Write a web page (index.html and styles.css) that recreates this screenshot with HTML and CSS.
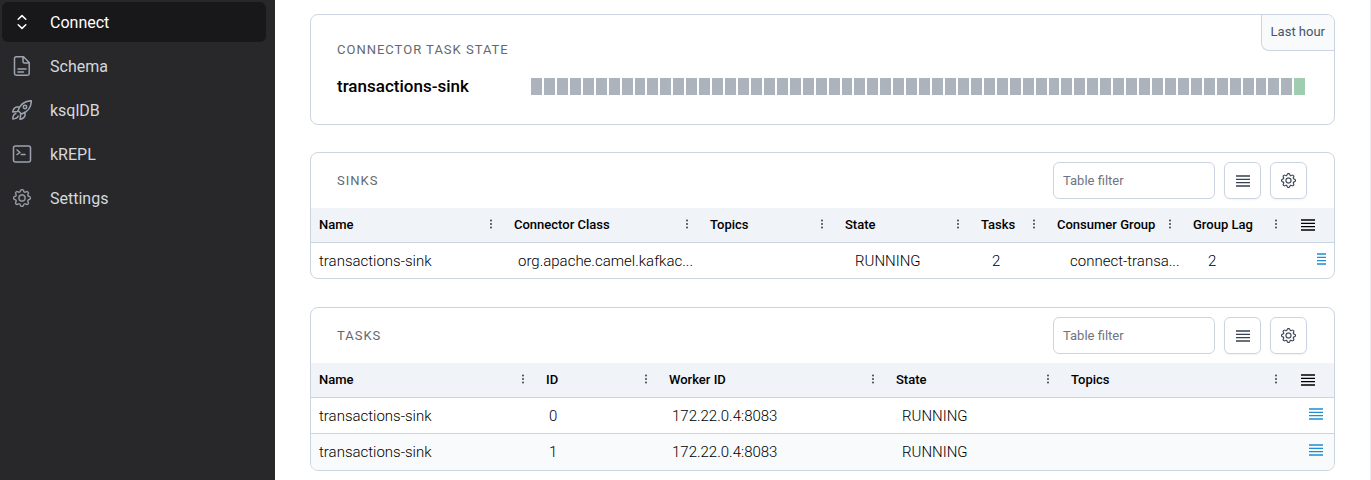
FILE: index.html
```html
<!DOCTYPE html>
<html lang="en">
<head>
<meta charset="utf-8">
<title>Connect</title>
<link rel="stylesheet" href="styles.css">
</head>
<body>
<svg class="sprite" aria-hidden="true">
  <symbol id="gear" viewBox="0 0 16 16"><path fill="currentColor" stroke="currentColor" stroke-width=".2" d="M8 4.754a3.246 3.246 0 1 0 0 6.492 3.246 3.246 0 0 0 0-6.492zM5.754 8a2.246 2.246 0 1 1 4.492 0 2.246 2.246 0 0 1-4.492 0z"/><path fill="currentColor" stroke="currentColor" stroke-width=".2" d="M9.796 1.343c-.527-1.79-3.065-1.79-3.592 0l-.094.319a.873.873 0 0 1-1.255.52l-.292-.16c-1.64-.892-3.433.902-2.54 2.541l.159.292a.873.873 0 0 1-.52 1.255l-.319.094c-1.79.527-1.79 3.065 0 3.592l.319.094a.873.873 0 0 1 .52 1.255l-.16.292c-.892 1.64.901 3.434 2.541 2.54l.292-.159a.873.873 0 0 1 1.255.52l.094.319c.527 1.79 3.065 1.79 3.592 0l.094-.319a.873.873 0 0 1 1.255-.52l.292.16c1.64.893 3.434-.902 2.54-2.541l-.159-.292a.873.873 0 0 1 .52-1.255l.319-.094c1.79-.527 1.79-3.065 0-3.592l-.319-.094a.873.873 0 0 1-.52-1.255l.16-.292c.893-1.64-.902-3.433-2.541-2.54l-.292.159a.873.873 0 0 1-1.255-.52l-.094-.319zm-2.633.283c.246-.835 1.428-.835 1.674 0l.094.319a1.873 1.873 0 0 0 2.693 1.115l.291-.16c.764-.415 1.6.42 1.184 1.185l-.159.292a1.873 1.873 0 0 0 1.116 2.692l.318.094c.835.246.835 1.428 0 1.674l-.319.094a1.873 1.873 0 0 0-1.115 2.693l.16.291c.415.764-.42 1.6-1.185 1.184l-.291-.159a1.873 1.873 0 0 0-2.693 1.116l-.094.318c-.246.835-1.428.835-1.674 0l-.094-.319a1.873 1.873 0 0 0-2.692-1.115l-.292.16c-.764.415-1.6-.42-1.184-1.185l.159-.291A1.873 1.873 0 0 0 1.945 8.93l-.319-.094c-.835-.246-.835-1.428 0-1.674l.319-.094A1.873 1.873 0 0 0 3.06 4.377l-.16-.292c-.415-.764.42-1.6 1.185-1.184l.292.159a1.873 1.873 0 0 0 2.692-1.115l.094-.319z"/></symbol>
  <symbol id="lines" viewBox="0 0 14 12" preserveAspectRatio="none"><path fill="none" stroke="currentColor" stroke-width="1.3" d="M0 1h14M0 4.4h14M0 7.7h14M0 11h14"/></symbol>
  <symbol id="dots" viewBox="0 0 4 10"><g fill="currentColor"><circle cx="2" cy="1.5" r=".9"/><circle cx="2" cy="5" r=".9"/><circle cx="2" cy="8.5" r=".9"/></g></symbol>
</svg>
<div class="app">
  <nav class="sidebar">
    <a class="nav-item active" href="#connect">
      <svg class="nav-icon" viewBox="0 0 20 20"><path d="M6.2 7.2 10 3.6l3.8 3.6M6.2 12.8l3.8 3.6 3.8-3.6"/></svg>Connect</a>
    <a class="nav-item" href="#schema">
      <svg class="nav-icon" viewBox="0 0 20 20"><path d="M4.2.8h7.3l5.7 5.7v11a1.7 1.7 0 0 1-1.7 1.7H4.2a1.7 1.7 0 0 1-1.7-1.7v-15A1.7 1.7 0 0 1 4.2.8ZM11 1v4.5A1.5 1.5 0 0 0 12.500 7H17M6 13h8M6 16h5.500"/></svg>Schema</a>
    <a class="nav-item" href="#ksqldb">
      <svg class="nav-icon" viewBox="0 0 20 20"><path d="M6 10.500C8 5 12.500.800 19.300.700 19.500 7 15.500 12 9.500 14ZM6 10.500l3.500 3.500M7.600 7H4.500C2.500 7.500 1.200 9.500.700 12l5-.500M13 12.500v3c-.500 2-2.500 3.300-5 3.800l.700-5M3.800 13.500C1.800 14 .900 16.500.800 19c2.500-.100 4.700-.900 5.400-2.900"/><circle cx="13" cy="7" r="1.700"/></svg>ksqlDB</a>
    <a class="nav-item" href="#krepl">
      <svg class="nav-icon" viewBox="0 0 20 20"><rect x="1.500" y="2" width="17" height="16" rx="2"/><path d="M5 6l3 2.500L5 10.500M9.300 10.500H13"/></svg>kREPL</a>
    <a class="nav-item" href="#settings">
      <svg class="nav-icon gear"><use href="#gear"/></svg>Settings</a>
  </nav>
  <main class="content">
    <section class="card state-card">
      <button class="range" type="button">Last hour</button>
      <h2 class="card-title">Connector task state</h2>
      <div class="state-row">
        <h3 class="connector">transactions-sink</h3>
        <div class="bars" id="bars"></div>
      </div>
    </section>

    <section class="card">
      <header class="toolbar">
        <h2 class="card-title">Sinks</h2>
        <input class="filter" type="text" placeholder="Table filter" aria-label="Filter sinks">
        <button class="tool" type="button" aria-label="Rows"><svg class="lines"><use href="#lines"/></svg></button>
        <button class="tool" type="button" aria-label="Table settings"><svg class="tool-gear"><use href="#gear"/></svg></button>
      </header>
      <table class="grid sinks">
        <thead><tr>
          <th>Name<svg class="dots"><use href="#dots"/></svg></th>
          <th>Connector Class<svg class="dots"><use href="#dots"/></svg></th>
          <th>Topics<svg class="dots"><use href="#dots"/></svg></th>
          <th>State<svg class="dots"><use href="#dots"/></svg></th>
          <th>Tasks<svg class="dots"><use href="#dots"/></svg></th>
          <th>Consumer Group<svg class="dots"><use href="#dots"/></svg></th>
          <th>Group Lag<svg class="dots"><use href="#dots"/></svg></th>
          <th class="menu"><svg class="lines"><use href="#lines"/></svg></th>
        </tr></thead>
        <tbody><tr>
          <td>transactions-sink</td><td>org.apache.camel.kafkac...</td><td></td><td>RUNNING</td><td>2</td><td>connect-transa...</td><td>2</td>
          <td class="action"><svg class="lines small"><use href="#lines"/></svg></td>
        </tr></tbody>
      </table>
    </section>

    <section class="card">
      <header class="toolbar">
        <h2 class="card-title">Tasks</h2>
        <input class="filter" type="text" placeholder="Table filter" aria-label="Filter tasks">
        <button class="tool" type="button" aria-label="Rows"><svg class="lines"><use href="#lines"/></svg></button>
        <button class="tool" type="button" aria-label="Table settings"><svg class="tool-gear"><use href="#gear"/></svg></button>
      </header>
      <table class="grid tasks">
        <thead><tr>
          <th>Name<svg class="dots"><use href="#dots"/></svg></th>
          <th>ID<svg class="dots"><use href="#dots"/></svg></th>
          <th>Worker ID<svg class="dots"><use href="#dots"/></svg></th>
          <th>State<svg class="dots"><use href="#dots"/></svg></th>
          <th>Topics<svg class="dots"><use href="#dots"/></svg></th>
          <th class="menu"><svg class="lines"><use href="#lines"/></svg></th>
        </tr></thead>
        <tbody>
          <tr><td>transactions-sink</td><td>0</td><td>172.22.0.4:8083</td><td>RUNNING</td><td></td>
          <td class="action"><svg class="lines"><use href="#lines"/></svg></td></tr>
          <tr><td>transactions-sink</td><td>1</td><td>172.22.0.4:8083</td><td>RUNNING</td><td></td>
          <td class="action"><svg class="lines"><use href="#lines"/></svg></td></tr>
        </tbody>
      </table>
    </section>
  </main>
</div>
<script src="bars.js"></script>
</body>
</html>
```
FILE: styles.css
```css
* { box-sizing: border-box; }
body { margin: 0; background: #fff; color: #000; font-family: Roboto, "Liberation Sans", sans-serif; font-size: 15px; }
h2, h3 { margin: 0; }
svg { display: block; flex: none; }
.sprite { display: none; }
.app { display: flex; min-height: 100vh; border-right: 1px solid #e9eaec; }

.sidebar { flex: none; width: 275px; padding: 2px 9px 2px 2px; display: flex; flex-direction: column; gap: 4px; background: #28282a; }
.nav-item { display: flex; align-items: center; gap: 18px; height: 40px; padding: 0 10px; border-radius: 6px; color: #d5d8dd; font-size: 16px; text-decoration: none; }
.nav-item.active { background: #18181a; color: #fff; }
.nav-icon { width: 20px; height: 20px; fill: none; stroke: #9ca3af; stroke-width: 1.5; stroke-linecap: round; stroke-linejoin: round; }
.active .nav-icon { stroke: #fff; }
.nav-icon.gear { padding: 1px; color: #9ca3af; stroke: none; }

.content { flex: 1; min-width: 0; padding: 14px 35px 9px; display: flex; flex-direction: column; }
.card { position: relative; border: 1px solid #cbd5e1; border-radius: 8px; overflow: hidden; background: #fff; }
.card + .card { margin-top: 28px; }
.state-card + .card { margin-top: 27px; }
.card-title { color: #64696f; font-size: 13px; line-height: 16px; font-weight: 400; letter-spacing: 1px; text-transform: uppercase; }
.state-card { padding: 27px 29px 26px 26px; }
.range { position: absolute; top: 0; right: 0; height: 36px; padding: 0 9px 2px; border: 0 solid #cbd5e1; border-width: 0 0 1px 1px; border-bottom-left-radius: 8px; background: #f8fafc; color: #475569; font: 13px Roboto, "Liberation Sans", sans-serif; }
.state-row { display: flex; align-items: center; margin-top: 16px; }
.connector { flex: none; width: 194px; font-size: 17px; line-height: 24px; font-weight: 500; }
.bars { flex: 1; display: flex; gap: 2px; height: 17px; }
.bar { flex: 1; background: #adb3bc; }
.bar.running { background: #a0ccb0; }

.toolbar { display: flex; align-items: center; height: 55px; padding: 0 27px 0 26px; }
.toolbar .card-title { flex: 1; }
.filter { width: 162px; height: 37px; padding: 0 9px; border: 1px solid #cbd5e1; border-radius: 6px; background: #fff; font: 13px Roboto, "Liberation Sans", sans-serif; }
.filter::placeholder { color: #6f7580; opacity: 1; }
.tool { display: flex; align-items: center; justify-content: center; width: 37px; height: 37px; margin-left: 9px; padding: 0; border: 1px solid #cbd5e1; border-radius: 6px; background: #fff; color: #374151; box-shadow: 0 1px 2px rgba(0, 0, 0, .05); }
.tool-gear { width: 15px; height: 15px; }
.lines { width: 14px; height: 12px; }
.lines.small { width: 9px; }
.dots { width: 4px; height: 10px; color: #333; }

.grid, .grid thead, .grid tbody { display: block; }
.grid tr { display: grid; }
.grid th, .grid td { display: flex; align-items: center; min-width: 0; padding: 0 8px; white-space: nowrap; text-align: left; }
.grid th { justify-content: space-between; height: 34px; padding: 0 13px 2px 8px; font-size: 13px; font-weight: 500; }
.grid th.menu { padding: 0 10px; }
.grid thead tr { background: #f0f3f8; border-bottom: 1px solid #cbd5e1; }
.grid td { height: 35px; font-size: 15px; font-weight: 300; }
.grid tbody tr + tr { border-top: 1px solid #cbd5e1; background: #f8fafc; }
.grid tbody tr + tr td { height: 36px; }
.grid td.action { justify-content: flex-end; padding-bottom: 4px; color: #1e8fd0; }
.sinks thead tr { grid-template-columns: 195fr 196fr 135fr 136fr 76fr 136fr 106fr 43fr; }
.sinks tbody tr { grid-template-columns: 199fr 199fr 138fr 137fr 78fr 138fr 107fr 27fr; }
.tasks thead tr { grid-template-columns: 227fr 123fr 227fr 175fr 228fr 43fr; }
.tasks tbody tr { grid-template-columns: 230fr 123fr 230fr 177fr 230fr 33fr; }
.tasks td.action { padding-right: 11px; }
```
FILE: bars.js
```js
const bars = document.getElementById('bars');
for (let i = 0; i < 60; i++) {
  const bar = document.createElement('span');
  bar.className = i === 59 ? 'bar running' : 'bar';
  bars.appendChild(bar);
}
```
